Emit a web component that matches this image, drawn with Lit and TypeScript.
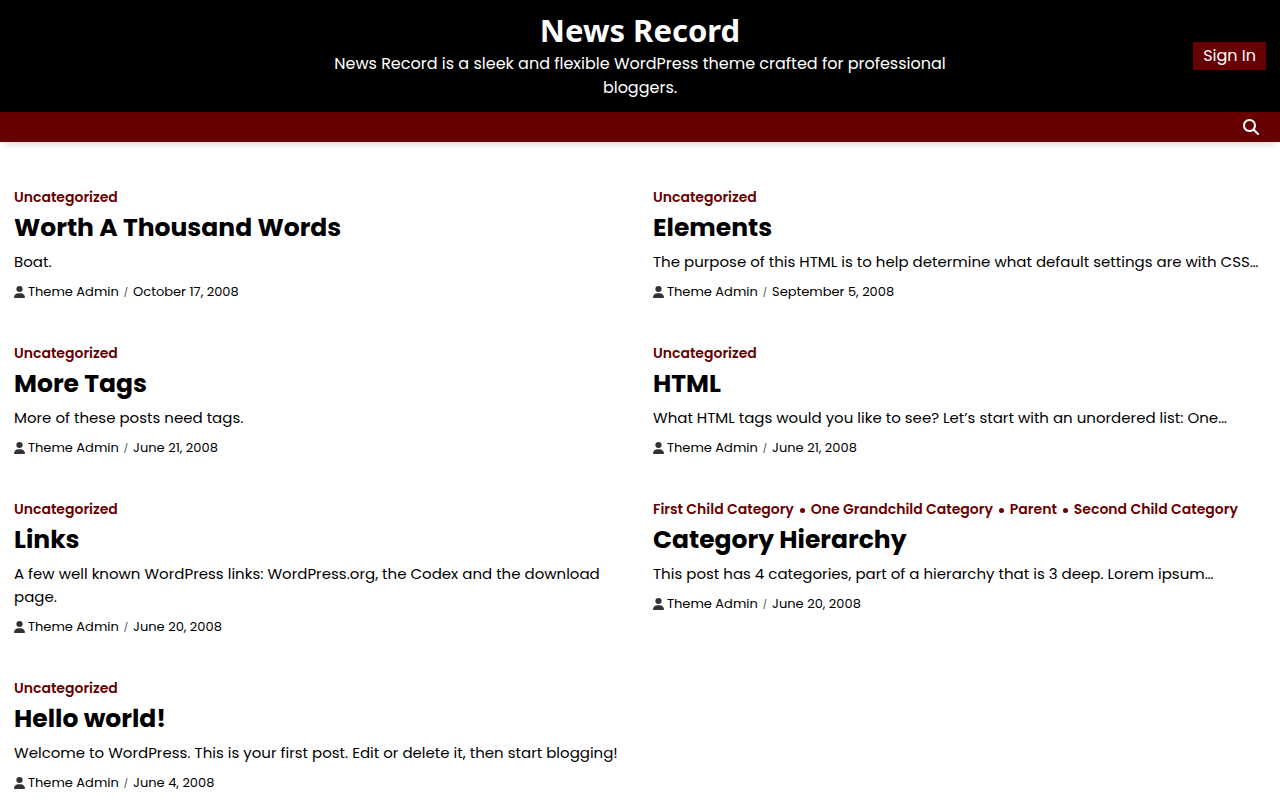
import { LitElement, html, css, svg } from "lit";
import { customElement, property } from "lit/decorators.js";

interface Post {
  categories: string[];
  title: string;
  excerpt: string;
  date: string;
}

const posts: Post[] = [
  { categories: ["Uncategorized"], title: "Worth A Thousand Words", excerpt: "Boat.", date: "October 17, 2008" },
  { categories: ["Uncategorized"], title: "Elements", excerpt: "The purpose of this HTML is to help determine what default settings are with CSS…", date: "September 5, 2008" },
  { categories: ["Uncategorized"], title: "More Tags", excerpt: "More of these posts need tags.", date: "June 21, 2008" },
  { categories: ["Uncategorized"], title: "HTML", excerpt: "What HTML tags would you like to see? Let’s start with an unordered list: One…", date: "June 21, 2008" },
  { categories: ["Uncategorized"], title: "Links", excerpt: "A few well known WordPress links: WordPress.org, the Codex and the download page.", date: "June 20, 2008" },
  { categories: ["First Child Category", "One Grandchild Category", "Parent", "Second Child Category"], title: "Category Hierarchy", excerpt: "This post has 4 categories, part of a hierarchy that is 3 deep. Lorem ipsum…", date: "June 20, 2008" },
  { categories: ["Uncategorized"], title: "Hello world!", excerpt: "Welcome to WordPress. This is your first post. Edit or delete it, then start blogging!", date: "June 4, 2008" },
];

const searchPath = svg`<path d="M416 208c0 45.900-14.900 88.300-40 122.700L502.600 457.400c12.500 12.500 12.500 32.800 0 45.300s-32.800 12.500-45.300 0L330.700 376c-34.400 25.200-76.800 40-122.700 40C93.100 416 0 322.900 0 208S93.100 0 208 0S416 93.100 416 208zM208 352a144 144 0 1 0 0-288 144 144 0 1 0 0 288z"/>`;
const userPath = svg`<path d="M224 256A128 128 0 1 0 224 0a128 128 0 1 0 0 256zm-45.700 48C79.800 304 0 383.800 0 482.300C0 498.700 13.300 512 29.700 512H418.300c16.400 0 29.700-13.300 29.700-29.700C448 383.800 368.200 304 269.700 304H178.300z"/>`;

@customElement("post-card")
export class PostCard extends LitElement {
  @property({ attribute: false }) post!: Post;

  static styles = css`
    :host { display: block; min-width: 0; }
    a { color: inherit; text-decoration: none; }
    .categories {
      display: flex; flex-wrap: wrap; margin: 0; padding: 0; list-style: none;
      color: #670000; font-size: 14px; font-weight: 600; line-height: 20px;
    }
    .category { display: flex; align-items: center; }
    .category + .category::before {
      content: ""; width: 5px; height: 5px; margin: 2px 6px 0; border-radius: 50%; background: #670000;
    }
    .title { margin: 4px 0 5px; font-size: 25px; font-weight: 700; line-height: 34px; }
    .excerpt { margin: 0 0 9px; font-size: 15px; line-height: 23px; }
    .meta { display: flex; align-items: center; font-size: 13px; line-height: 20px; }
    .author { display: flex; align-items: center; gap: 3px; }
    .user { width: 11px; height: 12px; fill: #333; }
    .slash { margin: 0 5px; color: #333; font-size: 9px; }
  `;

  render() {
    const p = this.post;
    return html`
      <article>
        <ul class="categories">
          ${p.categories.map((c) => html`<li class="category"><a href="#">${c}</a></li>`)}
        </ul>
        <h2 class="title"><a href="#">${p.title}</a></h2>
        <p class="excerpt">${p.excerpt}</p>
        <div class="meta">
          <a class="author" href="#"><svg class="user" viewBox="0 0 448 512" preserveAspectRatio="none" aria-hidden="true">${userPath}</svg>Theme Admin</a>
          <span class="slash">/</span>
          <a href="#"><time>${p.date}</time></a>
        </div>
      </article>`;
  }
}

@customElement("app-root")
export class AppRoot extends LitElement {
  static styles = css`
    :host {
      display: block; background: #fff; color: #000;
      font-family: Poppins, Inter, sans-serif;
    }
    a { color: inherit; text-decoration: none; }
    .masthead {
      display: grid; grid-template-columns: 1fr 2fr 1fr; align-items: center;
      padding: 8px 14px 12px; background: #000; color: #fff;
    }
    .brand { grid-column: 2; text-align: center; }
    .name { margin: 0; font: 700 31px/44px "Noto Sans", sans-serif; }
    .tagline { margin: 0; font-size: 16px; line-height: 24px; }
    .sign-in {
      justify-self: end; padding: 2px 10px; background: #670000;
      font-size: 16px; line-height: 24px; margin-top: 4px;
    }
    .bar {
      display: flex; justify-content: flex-end; padding: 0 14px;
      background: #670000; box-shadow: 0 5px 8px -4px rgba(0, 0, 0, 0.2);
    }
    .search { display: flex; padding: 7px; border: 0; background: none; color: #fff; }
    .glass { width: 16px; height: 16px; fill: currentColor; }
    .posts {
      display: grid; grid-template-columns: repeat(2, minmax(0, 1fr));
      gap: 41px 26px; padding: 45px 14px 40px;
    }
    @media (max-width: 700px) {
      .masthead { grid-template-columns: 1fr auto; gap: 14px; }
      .brand { grid-column: 1; }
      .posts { grid-template-columns: 1fr; }
    }
  `;

  render() {
    return html`
      <header>
        <div class="masthead">
          <div class="brand">
            <h1 class="name"><a href="#">News Record</a></h1>
            <p class="tagline">News Record is a sleek and flexible WordPress theme crafted for professional bloggers.</p>
          </div>
          <a class="sign-in" href="#">Sign In</a>
        </div>
        <nav class="bar">
          <button class="search" type="button" aria-label="Search">
            <svg class="glass" viewBox="0 0 512 512" aria-hidden="true">${searchPath}</svg>
          </button>
        </nav>
      </header>
      <main class="posts">
        ${posts.map((p) => html`<post-card .post=${p}></post-card>`)}
      </main>`;
  }
}
